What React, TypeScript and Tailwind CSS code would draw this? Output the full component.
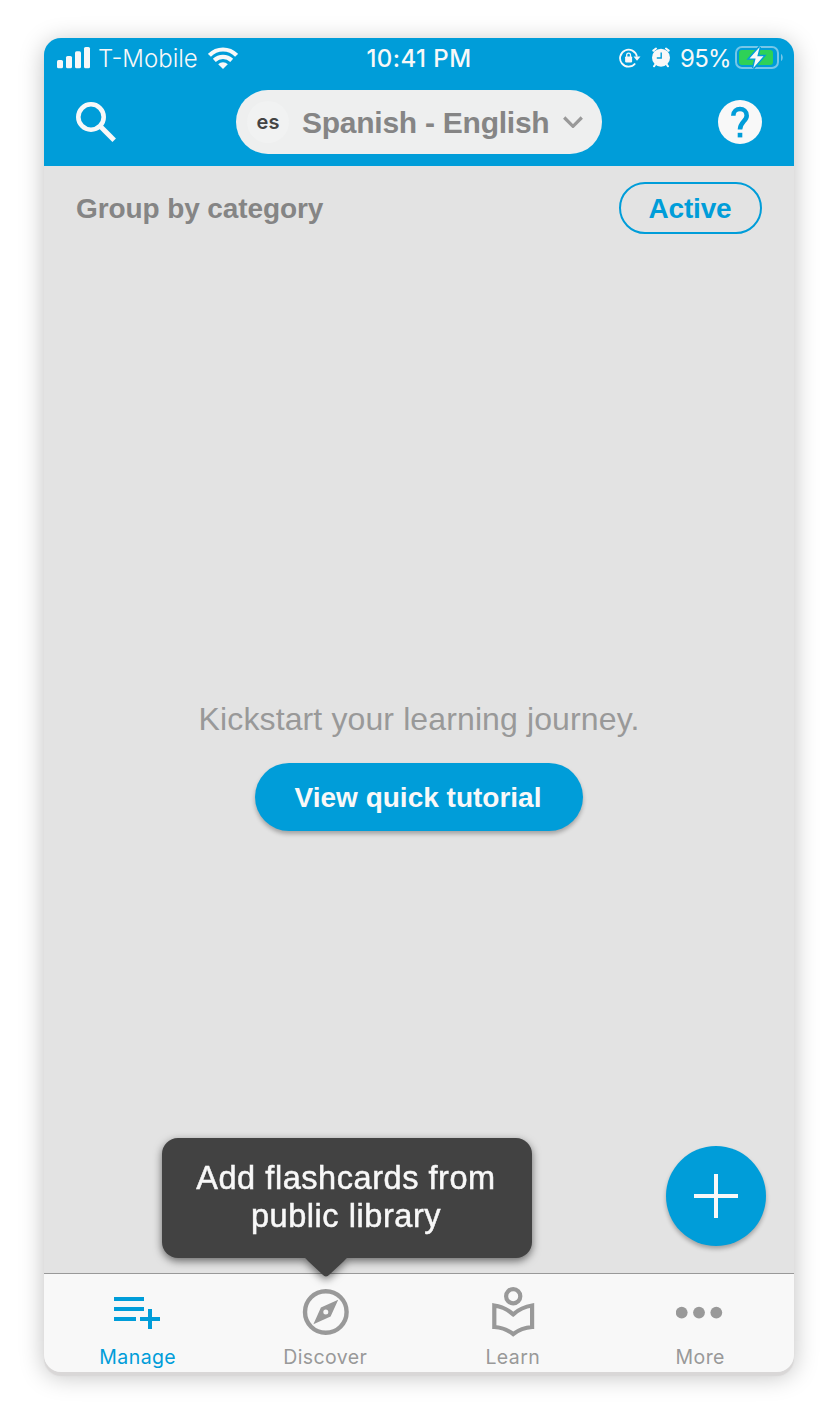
import React from "react";

const SignalIcon = () => (
  <svg className="block h-[22px] w-[34px]" viewBox="0 0 34 22" fill="#f8f8f8">
    <rect x="0" y="13" width="6" height="8.3" rx="1.6" />
    <rect x="9" y="9" width="6" height="12.3" rx="1.6" />
    <rect x="18" y="4.3" width="6" height="17" rx="1.6" />
    <rect x="27" y="0" width="6" height="21.3" rx="1.6" />
  </svg>
);

const WifiIcon = () => (
  <svg className="block h-[22px] w-[30px]" viewBox="0 0 30 22" fill="none" stroke="#f8f8f8" strokeWidth="4.2">
    <path d="M1.4 8.4C9 .5 21 .5 28.6 8.4" />
    <path d="M6.3 13.4C11.2 8.8 18.8 8.8 23.7 13.4" />
    <path d="M10.2 17.2C12.9 14.5 17.1 14.5 19.8 17.2L15 22Z" fill="#f8f8f8" stroke="none" />
  </svg>
);

const RotationLockIcon = () => (
  <svg className="block h-5 w-[22px]" viewBox="0 0 22 20" fill="none" stroke="#f8f8f8">
    <path d="M16.2 15.5A8.5 8.5 0 1 1 17.9 8.6" strokeWidth="1.8" />
    <path d="M14.5 8.5H21.5L18 12.7Z" fill="#f8f8f8" stroke="none" />
    <rect x="6.1" y="8.4" width="7" height="6" rx="0.8" fill="#f8f8f8" stroke="none" />
    <path d="M7.7 9V7a1.9 1.9 0 0 1 3.8 0V9" strokeWidth="1.3" />
  </svg>
);

const AlarmIcon = () => (
  <svg className="block h-[21px] w-[18px]" viewBox="0 0 18 21">
    <circle cx="9" cy="10.7" r="9" fill="#f8f8f8" />
    <path d="M1.3 3.6 4 1.5M16.7 3.6 14 1.5M3.3 17.5 2 19.3M14.7 17.5l1.3 1.8" stroke="#f8f8f8" strokeWidth="2" strokeLinecap="round" />
    <path d="M9.2 5.5V11H4.8" fill="none" stroke="#009dd9" strokeWidth="1.4" />
  </svg>
);

const BatteryIcon = () => (
  <svg className="block h-[23px] w-12" viewBox="0 0 48 23">
    <rect x="1" y="1" width="42" height="21" rx="6" fill="none" stroke="#76c6e8" strokeWidth="2" />
    <path d="M46 8c2.3 1 2.3 6 0 7Z" fill="#76c6e8" />
    <rect x="4" y="4" width="34" height="15" rx="3" fill="#2ed158" />
    <path d="M24.7 1 14.5 12.4H20.6L18.3 22 28.5 10.2H22.3Z" fill="#f8f8f8" stroke="#009dd9" strokeWidth="2.8" paintOrder="stroke" />
  </svg>
);

const SearchIcon = () => (
  <svg className="block size-10" viewBox="0 0 40 40" fill="none" stroke="#f8f8f8">
    <circle cx="15" cy="15" r="12.7" strokeWidth="4.6" />
    <path d="M25 25 38.2 38.2" strokeWidth="5" />
  </svg>
);

const HelpIcon = () => (
  <svg className="block size-11" viewBox="0 0 44 44">
    <circle cx="22" cy="22" r="22" fill="#f8f8f8" />
    <path d="M15.3 15.7C15.3 6.8 28.7 6.8 28.7 15.7 28.7 21 22 22 22 29.6" fill="none" stroke="#009dd9" strokeWidth="4.6" />
    <rect x="19.7" y="32.8" width="4.6" height="4.6" fill="#009dd9" />
  </svg>
);

const ManageIcon = () => (
  <svg className="block h-[52px] w-12" viewBox="0 0 48 52" fill="#009dd9">
    <path d="M0 12h30v4H0zM0 22h30v4H0zM0 32h22v4H0zM34 24h4v8h8v4h-8v8h-4v-8h-8v-4h8z" />
  </svg>
);

const DiscoverIcon = () => (
  <svg className="block h-[52px] w-12" viewBox="0 0 48 52">
    <circle cx="24.8" cy="27" r="20.8" fill="none" stroke="#999" strokeWidth="4.4" />
    <path fillRule="evenodd" d="M37.2 14.7 19.9 22.5 12.4 39.3 29.6 31.6ZM24.8 24.5a2.5 2.5 0 1 0 0 5 2.5 2.5 0 0 0 0-5Z" fill="#999" />
  </svg>
);

const LearnIcon = () => (
  <svg className="block h-[52px] w-12" viewBox="0 0 48 52" fill="none" stroke="#999" strokeWidth="4.2">
    <circle cx="24.2" cy="11.2" r="7.1" />
    <path d="M24.2 29.3C18.6 24.4 12.2 21.5 5.3 20.5V42C12.2 42.5 18.7 44.8 24.2 49 29.7 44.8 36.2 42.5 43.1 42V20.5C36.2 21.5 29.8 24.4 24.2 29.3Z" />
  </svg>
);

const MoreIcon = () => (
  <svg className="block h-[52px] w-12" viewBox="0 0 48 52" fill="#999">
    <circle cx="5.7" cy="27.6" r="5.9" />
    <circle cx="23" cy="27.6" r="5.9" />
    <circle cx="40.3" cy="27.6" r="5.9" />
  </svg>
);

const StatusBar = () => (
  <div className="grid h-10 grid-cols-[322px_106px_1fr] items-center whitespace-nowrap font-[Inter,sans-serif] text-2xl leading-[38px] text-[#f8f8f8]">
    <div className="flex items-center pl-[13px]">
      <SignalIcon />
      <span className="ml-[7px] w-[110px] pt-0.5 font-light">T-Mobile</span>
      <WifiIcon />
    </div>
    <span className="pt-0.5 text-center font-medium tracking-[0.45px]">10:41 PM</span>
    <div className="flex items-center pr-[11px]">
      <span className="ml-[147px]"><RotationLockIcon /></span>
      <span className="ml-[11px] -translate-y-px"><AlarmIcon /></span>
      <span className="ml-2.5 w-[55px] pt-0.5 tracking-[-0.7px]">95%</span>
      <span className="pb-px"><BatteryIcon /></span>
    </div>
  </div>
);

const Header = () => (
  <header className="h-32 bg-[#009dd9]">
    <StatusBar />
    <div className="flex h-[88px] items-center justify-between px-8">
      <SearchIcon />
      <button className="ml-1 flex h-16 w-[366px] items-center rounded-full bg-[#eeefef] pl-[11px]">
        <span className="flex size-[42px] items-center justify-center rounded-full bg-[#f1f2f2] font-[Inter,sans-serif] text-xl font-semibold text-[#444]">es</span>
        <span className="ml-[13px] w-[261px] whitespace-nowrap text-left text-[30px] font-bold tracking-[-0.25px] text-[#858585]">Spanish - English</span>
        <svg className="block h-3 w-5" viewBox="0 0 20 12" fill="none" stroke="#999" strokeWidth="3.2">
          <path d="M1.2 1.5 10 10.3 18.8 1.5" />
        </svg>
      </button>
      <HelpIcon />
    </div>
  </header>
);

const tabs = [
  { label: "Manage", Icon: ManageIcon, color: "text-[#009dd9]" },
  { label: "Discover", Icon: DiscoverIcon, color: "text-[#999]" },
  { label: "Learn", Icon: LearnIcon, color: "text-[#999]" },
  { label: "More", Icon: MoreIcon, color: "text-[#999]" },
];

export default function App() {
  return (
    <div className="h-[1410px] w-[838px] bg-white px-11 pt-[38px] font-['Liberation_Sans',Arial,sans-serif]">
      <div className="flex h-[1334px] w-[750px] flex-col overflow-hidden rounded-[17px] bg-[#e3e3e3] shadow-[0_4px_1px_#d9d7d7,0_4px_24px_rgba(0,0,0,0.25)]">
        <Header />
        <main className="relative flex flex-1 flex-col">
          <div className="flex items-center justify-between px-8 pt-4">
            <h1 className="whitespace-nowrap pt-0.5 text-[28px] font-bold tracking-[-0.1px] text-[#858585]">Group by category</h1>
            <button className="h-[52px] w-[143px] rounded-full border-2 border-[#009dd9] pt-0.5 pr-px text-[28px] font-bold tracking-[-0.2px] text-[#009dd9]">Active</button>
          </div>
          <div className="mt-[464px] flex flex-col items-center">
            <p className="whitespace-nowrap text-[32px] leading-[42px] tracking-[0.12px] text-[#999]">Kickstart your learning journey.</p>
            <button className="mt-[23px] h-[68px] w-[328px] rounded-full bg-[#009dd9] pt-0.5 pr-0.5 text-[28px] font-bold text-[#f8f8f8] shadow-[0_3px_4px_rgba(0,0,0,0.28)]">View quick tutorial</button>
          </div>
          <button className="absolute bottom-[27px] right-7 flex size-[100px] items-center justify-center rounded-full bg-[#009dd9] shadow-[0_3px_4px_rgba(0,0,0,0.28)]" aria-label="Add">
            <svg className="block size-11" viewBox="0 0 44 44" fill="#f8f8f8"><path d="M20 0h4v20h20v4H24v20h-4V24H0v-4h20z" /></svg>
          </button>
          <div className="absolute bottom-[15px] left-[118px] z-10 flex h-[120px] w-[370px] items-start justify-center rounded-2xl bg-[#424242] pt-[21px] pr-0.5 text-center text-[32.5px] leading-[38px] tracking-[0.55px] text-[#f8f8f8] drop-shadow-[0_3px_4px_rgba(0,0,0,0.55)] [-webkit-text-stroke:0.5px_#f8f8f8] [font-variant-ligatures:none]">
            <p className="whitespace-nowrap">Add flashcards from<br />public library</p>
            <svg className="absolute left-[140px] top-[119px] h-[21px] w-12" viewBox="0 0 48 21" fill="#424242"><path d="M0 0C3 0 4 2 6 4L20.5 17.5Q24 21.5 27.5 17.5L42 4C44 2 45 0 48 0Z" /></svg>
          </div>
        </main>
        <nav className="grid h-[99px] grid-cols-4 border-t border-[#999] bg-[#f8f8f8]">
          {tabs.map(({ label, Icon, color }) => (
            <button key={label} className={"flex flex-col items-center pt-[11px] font-[Inter,sans-serif] text-[19.5px] leading-6 tracking-[0.4px] " + color}>
              <Icon />
              <span className="mt-2">{label}</span>
            </button>
          ))}
        </nav>
      </div>
    </div>
  );
}
